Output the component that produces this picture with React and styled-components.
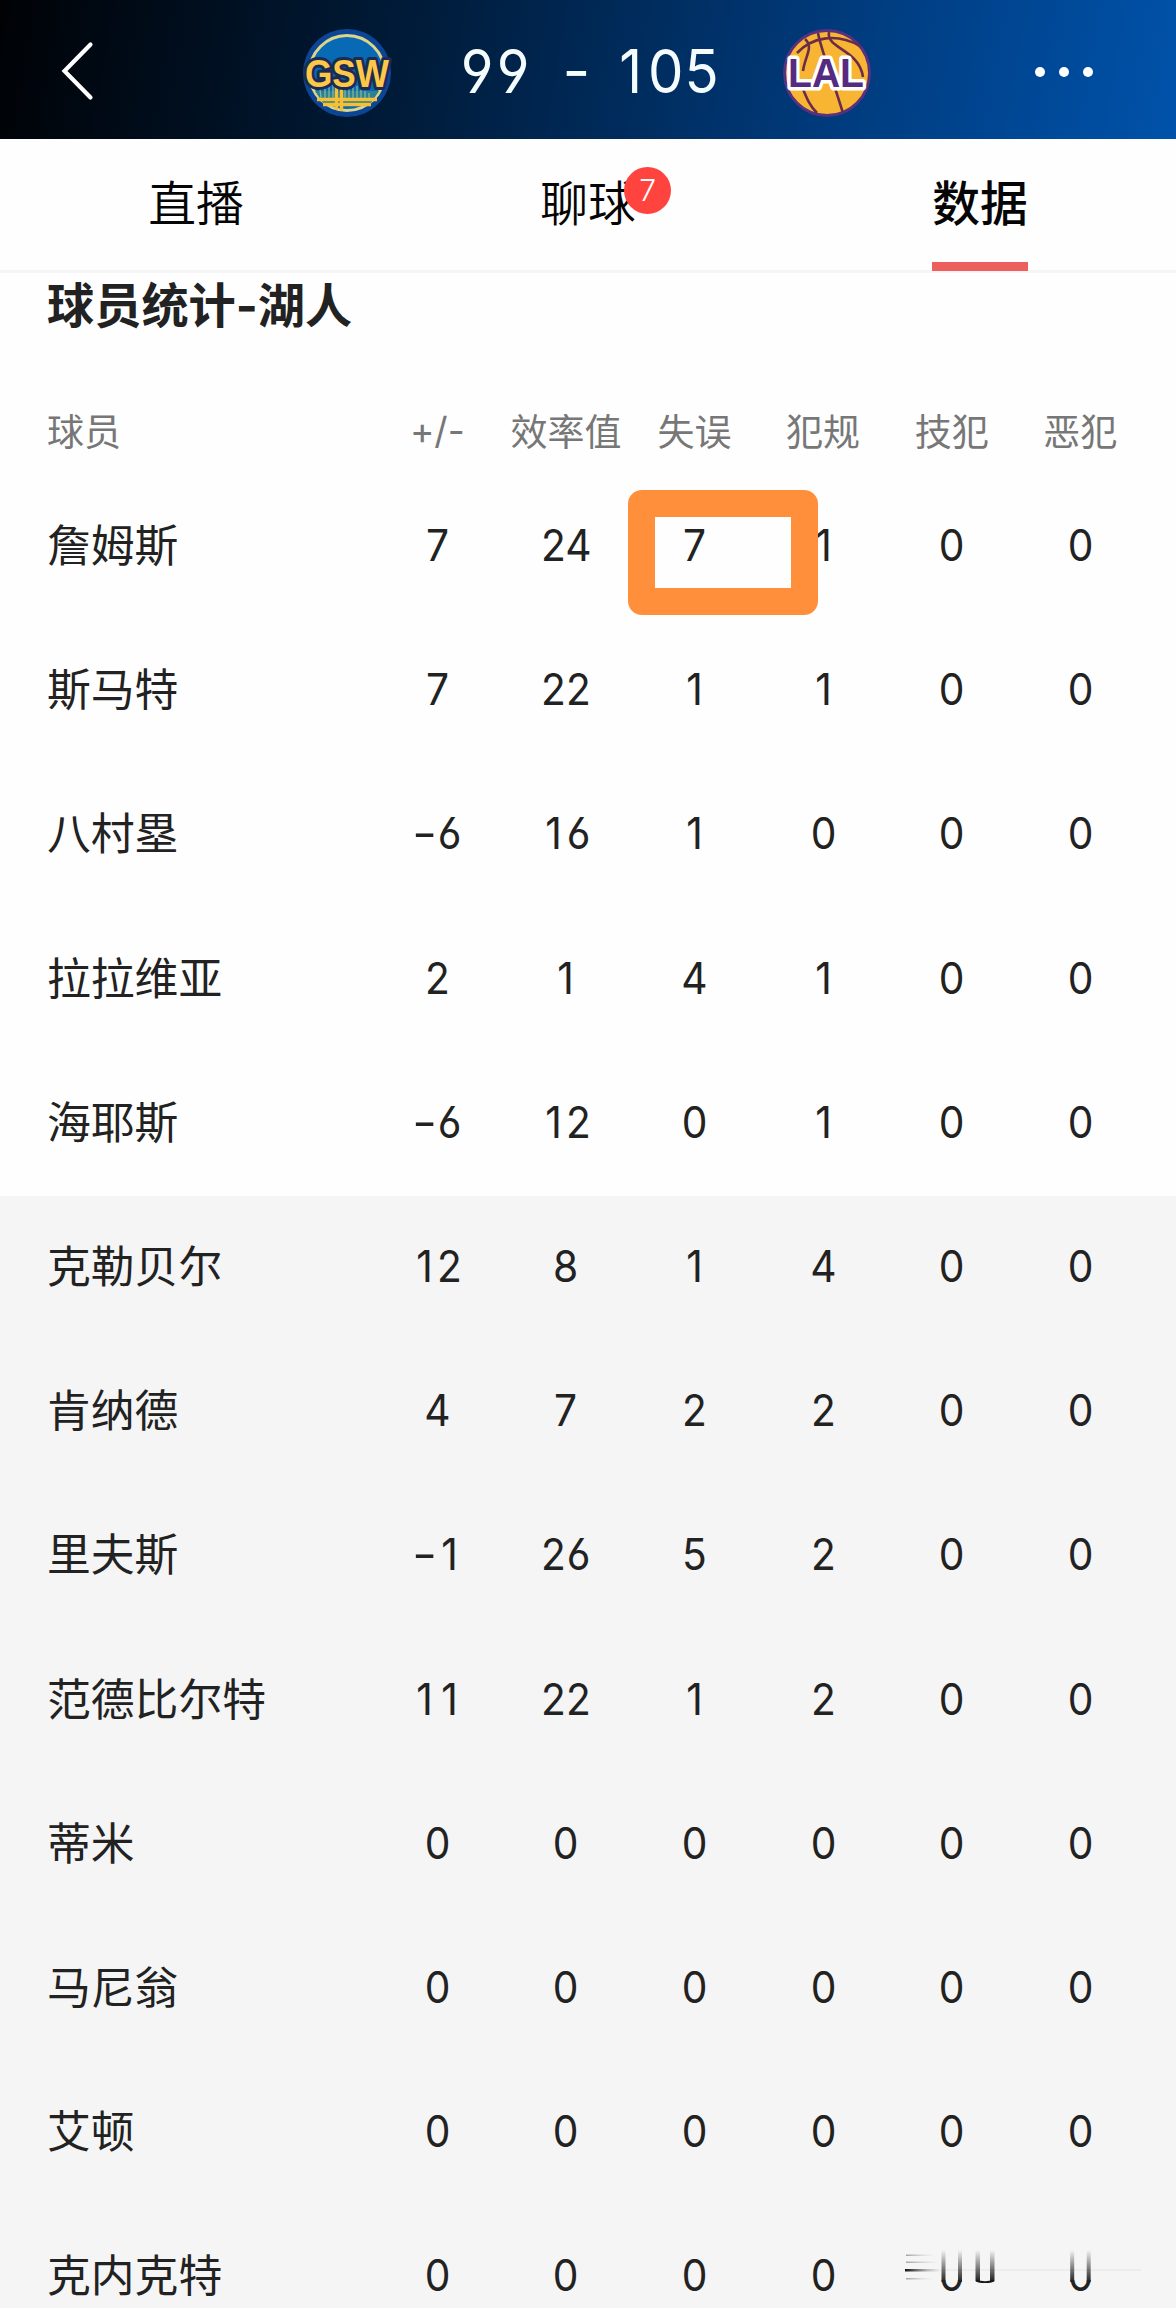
import React from "react";
import styled, { createGlobalStyle } from "styled-components";

const GlobalStyle = createGlobalStyle`
  * {
    box-sizing: border-box;
  }

  body {
    margin: 0;
    background: #fff;
    font-family: "Inter", "Noto Sans CJK SC", sans-serif;
    font-feature-settings: "cv03", "cv04", "calt" 0;
  }
`;

const Page = styled.div`
  width: 1176px;
  height: 2308px;
  overflow: hidden;
  background: #fefefe;
`;

const TopBar = styled.header`
  display: grid;
  grid-template-columns: 303px 89px 391px 88px 1fr;
  align-items: center;
  height: 139px;
  padding-top: 7px;
  background: linear-gradient(100deg, #000205 0%, #001d3d 37%, #003a7b 70%, #0052aa 100%);
`;

const BackButton = styled.button`
  width: 160px;
  height: 60px;
  margin-bottom: 5px;
  padding: 0 0 0 60px;
  border: none;
  background: none;
  text-align: left;

  svg {
    display: block;
  }
`;

const Logo = styled.svg`
  display: block;
  width: 88px;
  height: 88px;
  overflow: visible;

  text {
    font-family: "Liberation Sans", Arial, sans-serif;
    font-weight: bold;
    paint-order: stroke;
    stroke-linejoin: round;
  }
`;

const Score = styled.div`
  display: grid;
  grid-template-columns: 72px 82px 106px;
  justify-content: center;
  padding: 0 0 6px 3px;
  color: #f4fcff;
  font-size: 60.5px;
  line-height: 82px;
`;

const Dash = styled.span`
  padding-left: 9px;
  text-align: center;
`;

const Dots = styled.div`
  display: flex;
  gap: 14px;
  margin-bottom: 2px;
  padding-left: 164px;

  span {
    width: 10px;
    height: 10px;
    border-radius: 50%;
    background: #fff;
  }
`;

const Tabs = styled.nav`
  display: grid;
  grid-template-columns: repeat(3, 1fr);
  height: 134px;
  border-bottom: 3px solid #f5f5f5;
`;

const Tab = styled.div`
  position: relative;
  justify-self: center;
  height: 132px;
  padding-top: 30px;
  border-bottom: ${(props) => (props.$active ? "9px solid #ed5e5e" : "none")};
  color: #050505;
  font-size: 47.8px;
  font-weight: ${(props) => (props.$active ? 500 : 350)};
  line-height: 70px;
`;

const Badge = styled.span`
  position: absolute;
  top: 28px;
  left: 84px;
  width: 47px;
  height: 47px;
  border-radius: 50%;
  background: #ff433e;
  color: #fff;
  font-size: 30px;
  line-height: 46px;
  text-align: center;
`;

const Title = styled.h2`
  height: 115px;
  margin: 0;
  padding: 1px 47px 0;
  color: #222;
  font-size: 47.2px;
  font-weight: 700;
  line-height: 64px;
`;

const Row = styled.div`
  display: grid;
  grid-template-columns: 326px repeat(6, 128.6px);
  align-items: center;
  height: 144.2px;
  padding: 0 0 4px 47px;
  background: ${(props) => (props.$bench ? "#f5f5f5" : "transparent")};
  color: #222;
  font-size: 43.8px;
`;

const Name = styled.span`
  padding-bottom: 4px;
`;

const HeadRow = styled(Row)`
  height: 87px;
  padding-bottom: 3px;
  color: #777;
  font-size: 37px;
`;

const Cell = styled.span`
  position: relative;
  text-align: center;
  white-space: nowrap;
`;

const Digits = styled.span`
  display: flex;
  justify-content: center;
  padding-top: 1px;
`;

const Digit = styled.span`
  display: flex;
  justify-content: center;
  width: ${(props) => props.$width}px;
  transform: scaleX(${(props) => (props.$sign ? 1.25 : 0.93)});
`;

const Highlight = styled.i`
  position: absolute;
  top: 50%;
  left: -2px;
  z-index: 1;
  width: 190px;
  height: 125px;
  margin-top: -55px;
  border: 27px solid #ff8f3b;
  border-radius: 14px;
`;

const List = styled.div`
  position: relative;
`;

const Smudge = styled.svg`
  position: absolute;
  top: 1773px;
  left: 900px;
`;

const columns = ["+/-", "效率值", "失误", "犯规", "技犯", "恶犯"];

const players = [
  { name: "詹姆斯", stats: [7, 24, 7, 1, 0, 0], marked: 2 },
  { name: "斯马特", stats: [7, 22, 1, 1, 0, 0] },
  { name: "八村塁", stats: [-6, 16, 1, 0, 0, 0] },
  { name: "拉拉维亚", stats: [2, 1, 4, 1, 0, 0] },
  { name: "海耶斯", stats: [-6, 12, 0, 1, 0, 0] },
  { name: "克勒贝尔", stats: [12, 8, 1, 4, 0, 0], bench: true },
  { name: "肯纳德", stats: [4, 7, 2, 2, 0, 0], bench: true },
  { name: "里夫斯", stats: [-1, 26, 5, 2, 0, 0], bench: true },
  { name: "范德比尔特", stats: [11, 22, 1, 2, 0, 0], bench: true },
  { name: "蒂米", stats: [0, 0, 0, 0, 0, 0], bench: true },
  { name: "马尼翁", stats: [0, 0, 0, 0, 0, 0], bench: true },
  { name: "艾顿", stats: [0, 0, 0, 0, 0, 0], bench: true },
  { name: "克内克特", stats: [0, 0, 0, 0, 0, 0], bench: true },
];

// every digit gets the same width so the numbers line up
const Num = ({ value, width = 25 }) => (
  <Digits>
    {String(value)
      .split("")
      .map((char, i) => (
        <Digit key={i} $width={width} $sign={char === "-"}>
          {char}
        </Digit>
      ))}
  </Digits>
);

const WarriorsLogo = () => (
  <Logo viewBox="0 0 88 88">
    <circle cx="44" cy="44" r="44" fill="#0d4595" />
    <circle cx="44" cy="44" r="37.5" fill="#0869b5" stroke="#dcd58c" strokeWidth="3" />
    <path d="M12 62 H76 L68 74 H20 Z" fill="#2d8190" />
    <path d="M18 69l-1-9M22 69v-9M26 69v-12M30 69v-14M42 69v-13M46 69v-12M50 69v-14M54 69v-12M58 69v-9M62 69v-7M66 69v-5" stroke="#83b5a1" strokeWidth="1.3" />
    <path d="M14 70.500H74M20 75.500H68M33.500 58V81M38.500 58V82" stroke="#f7bf32" strokeWidth="3.400" />
    <text x="44" y="58" textAnchor="middle" fontSize="38" textLength="84" lengthAdjust="spacingAndGlyphs" fill="#fdc847" stroke="#1b2b52" strokeWidth="6">GSW</text>
  </Logo>
);

const LakersLogo = () => (
  <Logo viewBox="0 0 88 88">
    <circle cx="44" cy="44" r="42.500" fill="#f8b433" stroke="#59317f" strokeWidth="3" />
    <g fill="none" stroke="#6b2c4a" strokeWidth="2.600">
      <path d="M14 24C28 9 52 3 77 17" />
      <path d="M22 10C31 18 22 27 20 42" />
      <path d="M35 4C38 20 43 30 60 84" />
      <path d="M46 3C43 20 76 20 80 48" />
      <path d="M20 60C24 70 27 77 34 84" />
    </g>
    <text x="43" y="58" textAnchor="middle" fontSize="41" textLength="76" lengthAdjust="spacingAndGlyphs" fill="#552b82" stroke="#fff" strokeWidth="7">LAL</text>
  </Logo>
);

const App = () => {
  return (
    <Page>
      <GlobalStyle />
      <TopBar>
        <BackButton aria-label="back">
          <svg width="36" height="60" viewBox="0 0 36 60">
            <path d="M30.500 3.500L4.500 30L30.500 56.500" fill="none" stroke="#fff" strokeWidth="4.200" strokeLinecap="round" />
          </svg>
        </BackButton>
        <WarriorsLogo />
        <Score>
          <Num value={99} width={36} />
          <Dash>-</Dash>
          <Num value={105} width={35.3} />
        </Score>
        <LakersLogo />
        <Dots>
          <span />
          <span />
          <span />
        </Dots>
      </TopBar>
      <Tabs>
        <Tab>直播</Tab>
        <Tab>
          聊球
          <Badge>7</Badge>
        </Tab>
        <Tab $active>数据</Tab>
      </Tabs>
      <Title>球员统计-湖人</Title>
      <HeadRow>
        <span>球员</span>
        {columns.map((column) => (
          <Cell key={column}>{column}</Cell>
        ))}
      </HeadRow>
      <List>
        {players.map((player) => (
          <Row key={player.name} $bench={player.bench}>
            <Name>{player.name}</Name>
            {player.stats.map((value, i) => (
              <Cell key={i}>
                <Num value={value} />
                {player.marked === i && <Highlight />}
              </Cell>
            ))}
          </Row>
        ))}
        <Smudge width="255" height="35" viewBox="0 0 255 35">
          <defs>
            <linearGradient id="fadeDown" x1="0" y1="0" x2="0" y2="1">
              <stop offset="0" stopColor="#222" stopOpacity="0" />
              <stop offset="1" stopColor="#222" />
            </linearGradient>
            <linearGradient id="fadeRight">
              <stop offset="0" stopColor="#111" />
              <stop offset="0.6" stopColor="#222" stopOpacity="0.3" />
              <stop offset="1" stopColor="#222" stopOpacity="0" />
            </linearGradient>
          </defs>
          <rect width="255" height="32" fill="#f5f5f5" />
          <rect x="5" y="21" width="36" height="2.500" fill="url(#fadeRight)" />
          <g fill="url(#fadeRight)" opacity="0.350">
            <rect x="6" y="6.500" width="28" height="1.500" />
            <rect x="6" y="13.500" width="32" height="1.500" />
            <rect x="6" y="30" width="26" height="1.500" />
          </g>
          <rect x="41" y="21.500" width="200" height="1" fill="#e6e6e6" />
          <g fill="url(#fadeDown)">
            <rect x="41.500" y="2" width="4" height="32" />
            <rect x="58" y="2" width="4" height="32" />
            <rect x="75.500" y="2" width="4.500" height="31" />
            <rect x="90" y="2" width="4.500" height="31" />
            <rect x="170.200" y="2" width="4" height="32" />
            <rect x="186.700" y="2" width="4" height="32" />
          </g>
          <path d="M76 32.500Q85 36 94 32.500" fill="none" stroke="#181818" strokeWidth="2" />
        </Smudge>
      </List>
    </Page>
  );
};

export default App;
